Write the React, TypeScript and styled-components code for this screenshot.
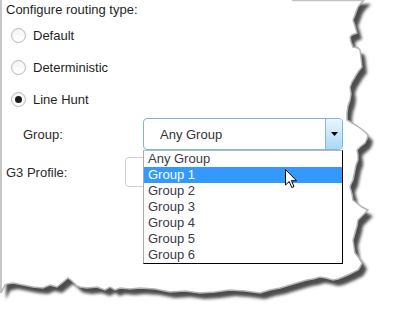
import React from 'react';
import styled, {createGlobalStyle} from "styled-components";

const GlobalStyle = createGlobalStyle`
  body {
    margin: 0;
    background: #fff;
    font-family: "Liberation Sans", Arial, sans-serif;
    font-size: 13px;
    color: #222;
  }
`

const groups = ["Any Group", "Group 1", "Group 2", "Group 3", "Group 4", "Group 5", "Group 6"];

const routingTypes = [
    {label: "Default", checked: false},
    {label: "Deterministic", checked: false},
    {label: "Line Hunt", checked: true},
];

const edgePath =
    "M1,-2 L366,-2 L361,3 L358,7 L356,12 L355,15 L353,20 L355,26 L357,33 L352,35 L350,37 L351,42 L353,47 " +
    "L358,48 L360,50 L361,58 L362,67 L358,72 L355,77 L352,82 L350,87 L351,94 L350,100 L348,106 L347,113 " +
    "L347,120 L354,124 L360,128 L364,131 L368,135 L367,139 L365,143 L360,147 L357,150 L358,155 L358,160 " +
    "L356,165 L355,170 L354,175 L353,180 L351,184 L350,187 L352,194 L353,200 L358,204 L362,207 L368,210 " +
    "L363,215 L358,220 L357,226 L355,233 L353,240 L354,247 L355,253 L359,258 L362,263 L360,267 L358,270 " +
    "L350,274 L343,277 L338,279 L333,280 L326,278 L320,277 L313,279 L307,280 L300,282 L290,285 L280,288 " +
    "L270,290 L260,293 L245,291 L230,290 L215,292 L200,293 L185,291 L170,292 L155,289 L140,288 L130,289 " +
    "L120,288 L115,290 L110,287 L105,290 L97,287 L87,288 L80,287 L77,286 L72,281 L68,278 L62,283 L57,287 " +
    "L50,285 L43,288 L33,287 L23,285 L13,283 L7,284 L5,285 L1,293 Z";

const TornEdge: React.FC = () => (
    <EdgeSvg width="393" height="317" viewBox="0 0 393 317">
        <defs>
            <filter id="tornShadow" x="-10%" y="-10%" width="130%" height="130%">
                <feGaussianBlur stdDeviation="1.6"/>
            </filter>
        </defs>
        <path d={edgePath} transform="translate(5,6)" fill="#4d4d4d" filter="url(#tornShadow)"/>
        <path d={edgePath} fill="#fff" stroke="#b4b4b4" strokeWidth="1.5"/>
        <line x1="292" y1="0.5" x2="364" y2="0.5" stroke="#c4c4c4" strokeWidth="1.5"/>
    </EdgeSvg>
);

const Cursor: React.FC = () => (
    <CursorSvg width="13" height="20" viewBox="0 0 13 20">
        <path d="M0.5,0.5 L0.5,16 L4.2,12.5 L6.8,18.5 L9,17.6 L6.5,11.7 L11.5,11.7 Z"
              fill="#fff" stroke="#000" strokeWidth="1" strokeLinejoin="miter"/>
    </CursorSvg>
);

const App: React.FC = () => {
    return (
        <>
            <GlobalStyle/>
            <Page>
                <TornEdge/>
                <Content>
                    <Heading>Configure routing type:</Heading>
                    <RadioList>
                        {routingTypes.map((t) => (
                            <RadioRow key={t.label}>
                                <RadioCircle $checked={t.checked}/>
                                <span>{t.label}</span>
                            </RadioRow>
                        ))}
                    </RadioList>
                    <FieldRow $top={3}>
                        <Label $width={137} $indent={17}>Group:</Label>
                        <Select>
                            <SelectValue>Any Group</SelectValue>
                            <ArrowButton>
                                <svg width="7" height="4" viewBox="0 0 7 4">
                                    <path d="M0,0 L7,0 L3.5,4 Z" fill="#000"/>
                                </svg>
                            </ArrowButton>
                            <OptionList>
                                {groups.map((g) => (
                                    <Option key={g} $selected={g === "Group 1"}>{g}</Option>
                                ))}
                                <Cursor/>
                            </OptionList>
                        </Select>
                    </FieldRow>
                    <FieldRow $top={7}>
                        <Label $width={119} $indent={0}>G3 Profile:</Label>
                        <TextBox/>
                    </FieldRow>
                </Content>
            </Page>
        </>
    );
};

const Page = styled.div`
  position: relative;
  width: 393px;
  height: 317px;
  overflow: hidden;
  background: #fff;
`

const EdgeSvg = styled.svg`
  position: absolute;
  left: 0;
  top: 0;
  z-index: 0;
  pointer-events: none;
`

const Content = styled.div`
  position: relative;
  z-index: 1;
  padding: 2px 0 0 6px;
  display: flex;
  flex-direction: column;
`

const Heading = styled.div`
  line-height: 16px;
  height: 16px;
  color: #1f1f1f;
`

const RadioList = styled.div`
  display: flex;
  flex-direction: column;
  padding-top: 1px;
`

const RadioRow = styled.label`
  display: flex;
  align-items: center;
  height: 32px;
  padding-left: 5px;
  gap: 7px;
  color: #1f1f1f;
`

const RadioCircle = styled.span<{ $checked: boolean }>`
  position: relative;
  width: 13px;
  height: 13px;
  border-radius: 50%;
  border: 1px solid #b9b9b9;
  background: linear-gradient(#f4f4f4, #fff);
  box-shadow: inset 0 0 1px rgba(0, 0, 0, 0.08);

  &::after {
    content: "";
    display: ${(p) => (p.$checked ? "block" : "none")};
    position: absolute;
    left: 3px;
    top: 3px;
    width: 7px;
    height: 7px;
    border-radius: 50%;
    background: #1a1a1a;
  }
`

const FieldRow = styled.div<{ $top: number }>`
  display: flex;
  align-items: center;
  margin-top: ${(p) => p.$top}px;
`

const Label = styled.div<{ $width: number; $indent: number }>`
  width: ${(p) => p.$width}px;
  padding-left: ${(p) => p.$indent}px;
  box-sizing: border-box;
  color: #2a2a2a;
`

const Select = styled.div`
  position: relative;
  display: flex;
  width: 200px;
  height: 32px;
  box-sizing: border-box;
  border: 1px solid #7fb3e6;
  border-radius: 4px;
  background: #fff;
`

const SelectValue = styled.div`
  flex: 1;
  display: flex;
  align-items: center;
  padding-left: 16px;
  color: #333;
`

const ArrowButton = styled.div`
  width: 17px;
  box-sizing: border-box;
  border-left: 1px solid #8ab6de;
  border-radius: 0 3px 3px 0;
  background: linear-gradient(#eaf6fd, #a7d9f5);
  display: flex;
  align-items: center;
  justify-content: center;
`

const OptionList = styled.div`
  position: absolute;
  left: -1px;
  top: calc(100% + 1px);
  width: 200px;
  box-sizing: border-box;
  border-left: 1px solid #a9a9a9;
  border-top: 1px solid #b8b8b8;
  border-right: 1px solid #000;
  border-bottom: 1px solid #000;
  background: #fff;
  z-index: 2;
`

const Option = styled.div<{ $selected: boolean }>`
  height: 16px;
  line-height: 16px;
  padding-left: 4px;
  color: ${(p) => (p.$selected ? "#fff" : "#3a3a48")};
  background: ${(p) => (p.$selected ? "#3399ff" : "transparent")};
`

const CursorSvg = styled.svg`
  position: absolute;
  left: 141px;
  top: 18px;
`

const TextBox = styled.div`
  width: 150px;
  height: 30px;
  box-sizing: border-box;
  border: 1px solid #cfcfcf;
  border-radius: 4px;
`

export default App;
